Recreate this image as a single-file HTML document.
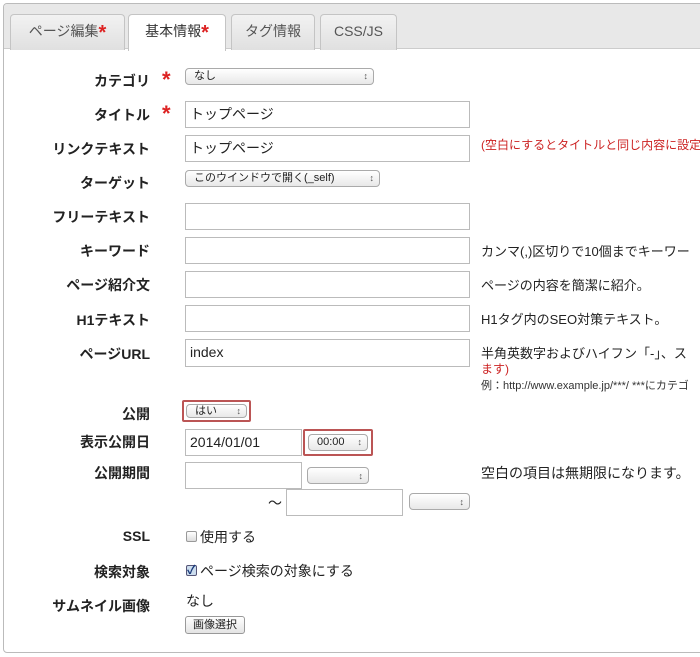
<!DOCTYPE html>
<html><head><meta charset="utf-8"><style>
*{box-sizing:border-box}
body{margin:0;width:700px;height:657px;background:#fff;font-family:"Liberation Sans","Noto Sans CJK JP",sans-serif;position:relative;overflow:hidden;color:#222}
.a{position:absolute}
.panel{left:3px;top:3px;width:720px;height:650px;border:1px solid #bbb;border-radius:4px}
.bar{left:4px;top:4px;width:720px;height:45px;background:#e8e8e8;border-bottom:1px solid #ccc;border-radius:3px 0 0 0}
.tab{top:14px;height:36px;background:linear-gradient(#f2f2f2,#e0e0e0);border:1px solid #c4c4c4;border-bottom:none;border-radius:4px 4px 0 0;font-size:14px;color:#555;text-align:center;line-height:33px}
.tab.on{background:#fff;color:#333;height:37px}
.st{color:#d22;font-size:20px;font-weight:bold;vertical-align:-3px}
.lb{font-size:14px;font-weight:bold;right:550px;text-align:right;white-space:nowrap}
.ast{left:162px;color:#d22;font-size:22px;font-weight:bold}
.in{border:1px solid #bbb;background:#fff;font-size:14px;padding-left:4px;line-height:25px}
.sel{border:1px solid #aaa;border-radius:4px;background:linear-gradient(#fff,#e8e8e8);font-size:11px;padding-left:8px;line-height:16px}
.sel:after{content:"\2195";position:absolute;right:5px;top:0;font-size:9px;color:#555}
.red{border:2px solid #b55;border-radius:2px;padding:2px}
.tx{font-size:13px;white-space:nowrap}
</style></head><body>
<div class="a panel"></div>
<div class="a bar"></div>
<div class="a tab" style="left:10px;width:115px">ページ編集<span class="st">*</span></div>
<div class="a tab on" style="left:128px;width:98px">基本情報<span class="st">*</span></div>
<div class="a tab" style="left:231px;width:84px">タグ情報</div>
<div class="a tab" style="left:320px;width:77px">CSS/JS</div>

<div class="a lb" style="top:71px">カテゴリ</div><div class="a ast" style="top:67px">*</div>
<div class="a sel" style="left:185px;top:68px;width:189px;height:17px;line-height:15px">なし</div>
<div class="a lb" style="top:105px">タイトル</div><div class="a ast" style="top:101px">*</div>
<div class="a in" style="left:185px;top:101px;width:285px;height:27px">トップページ</div>
<div class="a lb" style="top:139px">リンクテキスト</div>
<div class="a in" style="left:185px;top:135px;width:285px;height:27px">トップページ</div>
<div class="a tx" style="left:481px;top:136px;color:#c22;font-size:12px">(空白にするとタイトルと同じ内容に設定</div>
<div class="a lb" style="top:173px">ターゲット</div>
<div class="a sel" style="left:185px;top:170px;width:195px;height:17px;line-height:15px">このウインドウで開く(_self)</div>
<div class="a lb" style="top:207px">フリーテキスト</div>
<div class="a in" style="left:185px;top:203px;width:285px;height:27px"></div>
<div class="a lb" style="top:241px">キーワード</div>
<div class="a in" style="left:185px;top:237px;width:285px;height:27px"></div>
<div class="a tx" style="left:481px;top:241px">カンマ(,)区切りで10個までキーワー</div>
<div class="a lb" style="top:275px">ページ紹介文</div>
<div class="a in" style="left:185px;top:271px;width:285px;height:27px"></div>
<div class="a tx" style="left:481px;top:275px">ページの内容を簡潔に紹介。</div>
<div class="a lb" style="top:310px">H1テキスト</div>
<div class="a in" style="left:185px;top:305px;width:285px;height:27px"></div>
<div class="a tx" style="left:481px;top:309px">H1タグ内のSEO対策テキスト。</div>
<div class="a lb" style="top:344px">ページURL</div>
<div class="a in" style="left:185px;top:339px;width:285px;height:28px">index</div>
<div class="a tx" style="left:481px;top:343px">半角英数字およびハイフン「-」、ス</div>
<div class="a tx" style="left:481px;top:360px;color:#c22;font-size:12px">ます)</div>
<div class="a tx" style="left:481px;top:377px;font-size:11px;color:#333">例：http://www.example.jp/***/ ***にカテゴ</div>

<div class="a lb" style="top:404px">公開</div>
<div class="a red" style="left:182px;top:400px;width:69px;height:22px"><div class="sel" style="position:relative;height:14px;font-size:11px;line-height:12px">はい</div></div>
<div class="a lb" style="top:432px">表示公開日</div>
<div class="a in" style="left:185px;top:429px;width:117px;height:27px">2014/01/01</div>
<div class="a red" style="left:303px;top:429px;width:70px;height:27px;padding:3px"><div class="sel" style="position:relative;height:17px;line-height:15px">00:00</div></div>
<div class="a lb" style="top:463px">公開期間</div>
<div class="a in" style="left:185px;top:462px;width:117px;height:27px"></div>
<div class="a sel" style="left:307px;top:467px;width:62px;height:17px"></div>
<div class="a tx" style="left:481px;top:463px;font-size:14px">空白の項目は無期限になります。</div>
<div class="a tx" style="left:268px;top:493px;font-size:14px">〜</div>
<div class="a in" style="left:286px;top:489px;width:117px;height:27px"></div>
<div class="a sel" style="left:409px;top:493px;width:61px;height:17px"></div>

<div class="a lb" style="top:528px">SSL</div>
<div class="a" style="left:186px;top:531px;width:11px;height:11px;border:1px solid #999;border-radius:2px;background:linear-gradient(#fff,#ddd)"></div>
<div class="a tx" style="left:200px;top:527px;font-size:14px">使用する</div>
<div class="a lb" style="top:562px">検索対象</div>
<div class="a" style="left:186px;top:565px;width:11px;height:11px;border:1px solid #557;border-radius:2px;background:#cde;font-size:12px;line-height:9px;color:#1a3a7a;font-weight:bold">✓</div>
<div class="a tx" style="left:200px;top:561px;font-size:14px">ページ検索の対象にする</div>
<div class="a lb" style="top:596px">サムネイル画像</div>
<div class="a tx" style="left:186px;top:591px;font-size:14px">なし</div>
<div class="a" style="left:185px;top:616px;width:60px;height:18px;border:1px solid #999;border-radius:3px;background:linear-gradient(#fff,#e4e4e4);font-size:11px;text-align:center;line-height:16px">画像選択</div>
</body></html>
